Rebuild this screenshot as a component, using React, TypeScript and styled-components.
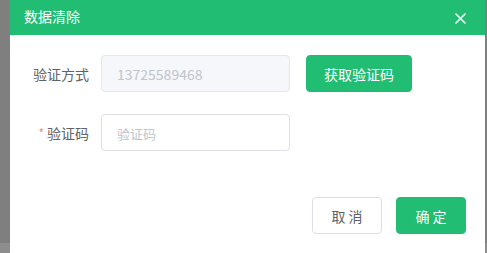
import React from "react";
import { createGlobalStyle, styled } from "styled-components";

const GlobalStyle = createGlobalStyle`
  html, body {
    margin: 0;
    padding: 0;
    height: 100%;
    background: linear-gradient(#7f7f7f 243px, #8d8d8d 243px);
    font-family: "Noto Sans CJK SC", "Noto Sans", sans-serif;
  }
`;

const Dialog = () => {
  return (
    <>
      <GlobalStyle />
      <Backdrop>
        <Panel>
          <Header>
            <span className="title">数据清除</span>
            <CloseButton aria-label="close">
              <svg width="11" height="11" viewBox="0 0 11 11">
                <path d="M1 1L10 10M10 1L1 10" stroke="#ffffff" strokeWidth="1.6" strokeLinecap="round" />
              </svg>
            </CloseButton>
          </Header>
          <Body>
            <Row>
              <Label>验证方式</Label>
              <Input value="13725589468" disabled readOnly />
              <Button $primary $wide>
                获取验证码
              </Button>
            </Row>
            <Row>
              <Label>
                <span className="star">*</span>验证码
              </Label>
              <Input placeholder="验证码" />
            </Row>
          </Body>
          <Footer>
            <Button>取 消</Button>
            <Button $primary>确 定</Button>
          </Footer>
        </Panel>
      </Backdrop>
    </>
  );
};

const Backdrop = styled.div`
  display: flex;
  padding-left: 10px;
  height: 253px;
  overflow: hidden;
`;

const Panel = styled.div`
  width: 475px;
  height: 280px;
  background: #ffffff;
  display: flex;
  flex-direction: column;
`;

const Header = styled.div`
  height: 35px;
  background: #21bd73;
  display: flex;
  align-items: center;
  justify-content: space-between;
  padding: 0 19px 0 14px;
  .title {
    color: #ffffff;
    font-size: 14px;
    line-height: 1;
    margin-top: -4px;
  }
`;

const CloseButton = styled.button`
  border: none;
  background: none;
  padding: 0;
  display: flex;
  margin-top: 2px;
  cursor: pointer;
`;

const Body = styled.div`
  padding-top: 20px;
  display: flex;
  flex-direction: column;
  gap: 22px;
`;

const Row = styled.div`
  display: flex;
  align-items: center;
  gap: 16px;
`;

const Label = styled.label`
  width: 79px;
  margin-right: -4px;
  text-align: right;
  font-size: 14px;
  color: #606266;
  .star {
    color: #f78989;
    font-size: 12px;
    margin-right: 3px;
    vertical-align: 1px;
  }
`;

const Input = styled.input`
  box-sizing: border-box;
  width: 189px;
  height: 37px;
  border: 1px solid #dcdfe6;
  border-radius: 4px;
  padding: 0 15px;
  font-family: "Noto Sans CJK SC", "Noto Sans", sans-serif;
  font-size: 14px;
  color: #606266;
  background: #ffffff;
  outline: none;
  &::placeholder {
    color: #c0c4cc;
    font-size: 13px;
  }
  &:disabled {
    background: #f5f7fa;
    border-color: #e4e7ed;
    color: #c0c4cc;
  }
`;

const Button = styled.button<{ $primary?: boolean; $wide?: boolean }>`
  box-sizing: border-box;
  width: ${(p) => (p.$wide ? "106px" : "70px")};
  height: 37px;
  border-radius: 4px;
  border: 1px solid ${(p) => (p.$primary ? "#21bd73" : "#dcdfe6")};
  background: ${(p) => (p.$primary ? "#21bd73" : "#ffffff")};
  color: ${(p) => (p.$primary ? "#ffffff" : "#606266")};
  font-family: "Noto Sans CJK SC", "Noto Sans", sans-serif;
  font-size: 14px;
  padding: 0;
  white-space: pre;
  cursor: pointer;
`;

const Footer = styled.div`
  display: flex;
  justify-content: flex-end;
  gap: 14px;
  padding: 46px 19px 0 0;
`;

export default Dialog;
